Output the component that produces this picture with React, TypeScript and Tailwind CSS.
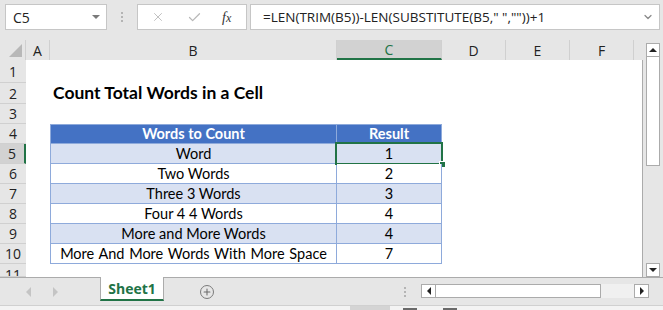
import { Check, ChevronDown, Plus, X } from "lucide-react";

const ui = "font-['Open_Sans',_'Noto_Sans',_sans-serif]";
const cell = "font-['Lato',_'Liberation_Sans',_sans-serif]";

const rows: { n: number; h: string; word?: string; result?: string; band?: boolean }[] = [
  { n: 1, h: "h-[23px]" },
  { n: 2, h: "h-[21px]" },
  { n: 3, h: "h-[20px]" },
  { n: 4, h: "h-[20px]" },
  { n: 5, h: "h-[20px]", word: "Word", result: "1", band: true },
  { n: 6, h: "h-[20px]", word: "Two Words", result: "2" },
  { n: 7, h: "h-[20px]", word: "Three 3 Words", result: "3", band: true },
  { n: 8, h: "h-[20px]", word: "Four 4 4 Words", result: "4" },
  { n: 9, h: "h-[20px]", word: "More and More Words", result: "4", band: true },
  { n: 10, h: "h-[20px]", word: "More And More Words With More Space", result: "7" },
  { n: 11, h: "h-[13px]" },
];

const colHeads = [
  { key: "A", w: "w-[24px]" },
  { key: "B", w: "w-[287px]" },
  { key: "C", w: "w-[105px]" },
  { key: "D", w: "w-[64px]" },
  { key: "E", w: "w-[64px]" },
  { key: "F", w: "w-[64px]" },
];

const FormulaBar = () => (
  <div className={`h-[40px] flex items-start pt-[4px] pl-[5px] pr-[3px] ${ui}`}>
    <div className="w-[102px] h-[26px] bg-white border border-[#c6c6c6] flex items-center justify-between pl-[7px] pr-[6px]">
      <span className="text-[14px] text-[#222]">C5</span>
      <span className="w-0 h-0 border-l-[4px] border-r-[4px] border-t-[4px] border-l-transparent border-r-transparent border-t-[#7a7a7a]" />
    </div>
    <div className="w-[30px] h-[26px] flex flex-col items-center justify-center gap-[2px]">
      <span className="w-[2px] h-[2px] bg-[#b4b4b4]" />
      <span className="w-[2px] h-[2px] bg-[#b4b4b4]" />
      <span className="w-[2px] h-[2px] bg-[#b4b4b4]" />
    </div>
    <div className="w-[110px] h-[26px] bg-white border border-[#c6c6c6] flex items-center">
      <X className="w-[14px] h-[14px] text-[#b8b8b8] ml-[13px]" strokeWidth={1.5} />
      <Check className="w-[15px] h-[15px] text-[#b8b8b8] ml-[22px]" strokeWidth={2} />
      <span className="ml-[20px] text-[14px] italic text-[#333] font-['Liberation_Serif',_serif]">
        f<span className="text-[12px]">x</span>
      </span>
    </div>
    <div className="ml-[3px] flex-1 h-[26px] bg-white border border-[#c6c6c6] flex items-center justify-between pl-[12px] pr-[5px]">
      <span className="text-[13.5px] text-[#222] whitespace-pre">=LEN(TRIM(B5))-LEN(SUBSTITUTE(B5," ",""))+1</span>
      <ChevronDown className="w-[12px] h-[12px] text-[#8a8a8a]" strokeWidth={2.5} />
    </div>
  </div>
);

const HeaderRow = () => (
  <div className={`h-[20px] flex ${ui} text-[14px] text-[#222]`}>
    <div className="w-[26px] h-full flex items-end justify-end pr-[3px] pb-[3px] border-r border-[#d0d0d0]">
      <svg width="13" height="13" viewBox="0 0 13 13">
        <polygon points="13,0 13,13 0,13" fill="#b8b8b8" />
      </svg>
    </div>
    {colHeads.map((c) => (
      <div
        key={c.key}
        className={`${c.w} h-full flex items-center justify-center border-r border-[#d0d0d0] ${
          c.key === "C" ? "bg-[#d2d2d2] text-[#217346] border-b-2 border-b-[#217346]" : ""
        }`}
      >
        {c.key}
      </div>
    ))}
    <div className="flex-1" />
  </div>
);

const SheetRow = ({ r }: { r: (typeof rows)[number] }) => {
  const isHead = r.n === 4;
  const inTable = r.n >= 4 && r.n <= 10;
  const fill = isHead ? "bg-[#4472c4] text-white font-bold" : r.band ? "bg-[#d9e1f2] text-black" : "bg-white text-black";
  const tb = inTable ? `border-b border-r border-[#8eaadb] ${isHead ? "border-t" : ""} ${fill}` : "bg-white text-black";
  return (
    <div className={`${r.h} flex`}>
      <div
        className={`w-[26px] h-full flex justify-center border-b border-[#d0d0d0] ${ui} text-[14px] ${
          r.n === 5 ? "bg-[#d2d2d2] border-r-2 border-r-[#217346] text-[#222]" : "bg-[#e6e6e6] text-[#222]"
        } ${r.n === 11 ? "items-start overflow-hidden pt-[1px] leading-[20px]" : "items-center"}`}
      >
        {r.n}
      </div>
      <div className="w-[24px] h-full bg-white" />
      <div
        className={`w-[287px] h-full flex items-center whitespace-nowrap ${cell} text-[14.5px] ${
          inTable ? `justify-center border-l ${tb}` : "bg-white text-black"
        }`}
      >
        {r.n === 2 && <span className="pl-[3px] text-[17.5px] font-bold">Count Total Words in a Cell</span>}
        {isHead && "Words to Count"}
        {r.n === 10 ? <span className="[word-spacing:1px]">{r.word}</span> : r.word}
      </div>
      <div className={`w-[105px] h-full flex items-center justify-center relative ${cell} text-[14.5px] ${tb}`}>
        {isHead && "Result"}
        {r.result}
        {r.n === 5 && (
          <>
            <span className="absolute left-[-2px] top-[-2px] right-[-2px] bottom-[-2px] border-2 border-[#217346]" />
            <span className="absolute right-[-5px] bottom-[-5px] w-[7px] h-[7px] bg-[#217346] border border-white" />
          </>
        )}
      </div>
      <div className="flex-1 h-full bg-white" />
    </div>
  );
};

const VScroll = () => (
  <div className="w-[20px] flex flex-col pt-[3px] pl-[3px] pr-[3px] pb-0">
    <div className="h-[14px] bg-white border border-[#ababab] flex items-center justify-center">
      <span className="w-0 h-0 [border-left:4px_solid_transparent] [border-right:4px_solid_transparent] [border-bottom:4px_solid_#222]" />
    </div>
    <div className="h-[109px] bg-white border border-[#ababab] border-t-0" />
    <div className="flex-1" />
    <div className="h-[14px] bg-white border border-[#ababab] flex items-center justify-center">
      <span className="w-0 h-0 [border-left:4px_solid_transparent] [border-right:4px_solid_transparent] [border-top:4px_solid_#222]" />
    </div>
  </div>
);

const TabsBar = () => (
  <div className={`h-[28px] flex items-start border-t border-[#ababab] ${ui}`}>
    <div className="w-[100px] h-full flex items-center pl-[26px] gap-[22px]">
      <span className="w-0 h-0 [border-top:5px_solid_transparent] [border-bottom:5px_solid_transparent] [border-right:5px_solid_#c4c4c4]" />
      <span className="w-0 h-0 [border-top:5px_solid_transparent] [border-bottom:5px_solid_transparent] [border-left:5px_solid_#c4c4c4]" />
    </div>
    <div className="w-[64px] h-[24px] -mt-px bg-white border-l border-r border-[#ababab] border-b-2 border-b-[#217346] flex items-center justify-center text-[14px] font-bold text-[#217346]">
      Sheet1
    </div>
    <div className="ml-[36px] mt-[7px] w-[14px] h-[14px] rounded-full border border-[#7a7a7a] flex items-center justify-center">
      <Plus className="w-[10px] h-[10px] text-[#6a6a6a]" strokeWidth={2.5} />
    </div>
    <div className="ml-[190px] mt-[9px] flex flex-col gap-[2px]">
      <span className="w-[2px] h-[2px] bg-[#b4b4b4]" />
      <span className="w-[2px] h-[2px] bg-[#b4b4b4]" />
      <span className="w-[2px] h-[2px] bg-[#b4b4b4]" />
    </div>
    <div className="ml-[15px] mt-[6px] flex h-[14px]">
      <div className="w-[15px] h-full bg-white border border-[#ababab] flex items-center justify-center">
        <span className="w-0 h-0 [border-top:4px_solid_transparent] [border-bottom:4px_solid_transparent] [border-right:4px_solid_#222]" />
      </div>
      <div className="w-[165px] h-full bg-white border border-[#ababab] border-l-0" />
      <div className="w-[33px] h-full bg-[#f0f0f0]" />
      <div className="w-[15px] h-full bg-white border border-[#ababab] flex items-center justify-center">
        <span className="w-0 h-0 [border-top:4px_solid_transparent] [border-bottom:4px_solid_transparent] [border-left:4px_solid_#222]" />
      </div>
    </div>
  </div>
);

export default function App() {
  return (
    <div className="w-[663px] h-[310px] bg-[#e6e6e6] flex flex-col overflow-hidden">
      <FormulaBar />
      <div className="h-[237px] flex">
        <div className="w-[643px] flex flex-col">
          <HeaderRow />
          <div className="flex-1 flex flex-col border-r border-[#ababab] overflow-hidden">
            {rows.map((r) => (
              <SheetRow key={r.n} r={r} />
            ))}
          </div>
        </div>
        <VScroll />
      </div>
      <TabsBar />
      <div className="flex-1 bg-[#f3f3f3] border-t border-[#d0d0d0] flex">
        <div className="ml-[350px] w-[40px] bg-[#d4d4d4]" />
        <div className="ml-[13px] w-[14px] bg-[#6a6a6a] mt-[2px]" />
        <div className="ml-[26px] w-[14px] bg-[#6a6a6a] mt-[2px]" />
      </div>
    </div>
  );
}
